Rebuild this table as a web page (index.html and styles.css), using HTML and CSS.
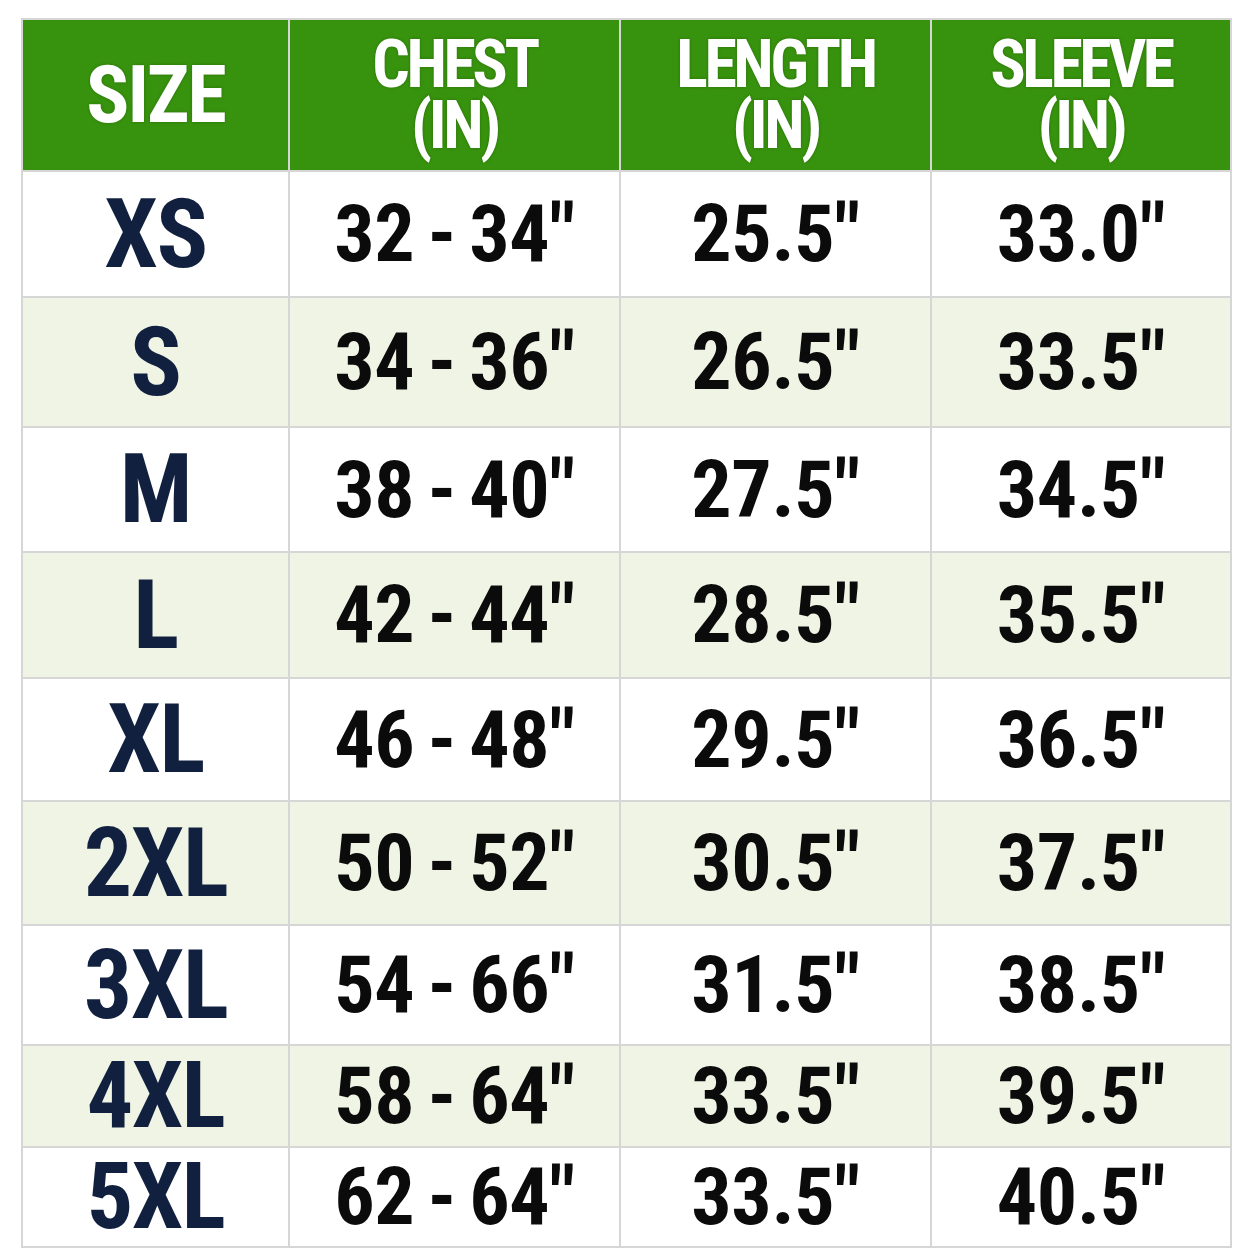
FILE: index.html
```html
<!DOCTYPE html>
<html>
<head>
<meta charset="utf-8">
<link rel="stylesheet" href="styles.css">
</head>
<body>
<div class="chart">
  <div class="cell head"><span class="t hsize">SIZE</span></div>
  <div class="cell head"><span class="t h2">CHEST<br>(IN)</span></div>
  <div class="cell head"><span class="t h2">LENGTH<br>(IN)</span></div>
  <div class="cell head"><span class="t h2">SLEEVE<br>(IN)</span></div>

  <div class="cell"><span class="t sz">XS</span></div>
  <div class="cell"><span class="t val">32 - 34"</span></div>
  <div class="cell"><span class="t val">25.5"</span></div>
  <div class="cell"><span class="t val">33.0"</span></div>

  <div class="cell alt"><span class="t sz">S</span></div>
  <div class="cell alt"><span class="t val">34 - 36"</span></div>
  <div class="cell alt"><span class="t val">26.5"</span></div>
  <div class="cell alt"><span class="t val">33.5"</span></div>

  <div class="cell"><span class="t sz">M</span></div>
  <div class="cell"><span class="t val">38 - 40"</span></div>
  <div class="cell"><span class="t val">27.5"</span></div>
  <div class="cell"><span class="t val">34.5"</span></div>

  <div class="cell alt"><span class="t sz">L</span></div>
  <div class="cell alt"><span class="t val">42 - 44"</span></div>
  <div class="cell alt"><span class="t val">28.5"</span></div>
  <div class="cell alt"><span class="t val">35.5"</span></div>

  <div class="cell"><span class="t sz">XL</span></div>
  <div class="cell"><span class="t val">46 - 48"</span></div>
  <div class="cell"><span class="t val">29.5"</span></div>
  <div class="cell"><span class="t val">36.5"</span></div>

  <div class="cell alt"><span class="t sz">2XL</span></div>
  <div class="cell alt"><span class="t val">50 - 52"</span></div>
  <div class="cell alt"><span class="t val">30.5"</span></div>
  <div class="cell alt"><span class="t val">37.5"</span></div>

  <div class="cell"><span class="t sz">3XL</span></div>
  <div class="cell"><span class="t val">54 - 66"</span></div>
  <div class="cell"><span class="t val">31.5"</span></div>
  <div class="cell"><span class="t val">38.5"</span></div>

  <div class="cell alt"><span class="t sz sm">4XL</span></div>
  <div class="cell alt"><span class="t val">58 - 64"</span></div>
  <div class="cell alt"><span class="t val">33.5"</span></div>
  <div class="cell alt"><span class="t val">39.5"</span></div>

  <div class="cell"><span class="t sz sm">5XL</span></div>
  <div class="cell"><span class="t val">62 - 64"</span></div>
  <div class="cell"><span class="t val">33.5"</span></div>
  <div class="cell"><span class="t val">40.5"</span></div>
</div>
</body>
</html>
```

FILE: styles.css
```css
html, body {
  margin: 0;
  padding: 0;
  background: #ffffff;
}
body {
  font-family: "Roboto Condensed", Roboto, "Liberation Sans", sans-serif;
  font-weight: 700;
}
.chart {
  margin: 18px 0 0 21px;
  width: 1211px;
  box-sizing: border-box;
  display: grid;
  grid-template-columns: 265px 329px 309px 298px;
  grid-template-rows: 150px 124px 128px 123px 124px 121px 122px 118px 100px 98px;
  gap: 2px;
  padding: 2px;
  background: #d6d6d6;
}
.cell {
  background: #ffffff;
  display: flex;
  align-items: center;
  justify-content: center;
}
.cell.alt {
  background: #eff4e5;
}
.cell.head {
  background: #37920d;
}
.t {
  display: inline-block;
  text-align: center;
  white-space: nowrap;
}
.hsize {
  color: #ffffff;
  font-size: 80px;
  line-height: 0.8;
  letter-spacing: -2px;
  text-shadow: 0 0 3px rgba(0,0,0,0.25);
}
.h2 {
  color: #ffffff;
  font-size: 66px;
  line-height: 61px;
  letter-spacing: -3.5px;
  text-shadow: 0 0 3px rgba(0,0,0,0.25);
}
.sz {
  color: #10203e;
  font-size: 96px;
  line-height: 0.8;
  letter-spacing: -1.5px;
}
.sz.sm {
  font-size: 92px;
}
.val {
  color: #0b0b0b;
  font-size: 80px;
  line-height: 0.8;
  word-spacing: -5px;
  letter-spacing: -0.3px;
}
```
